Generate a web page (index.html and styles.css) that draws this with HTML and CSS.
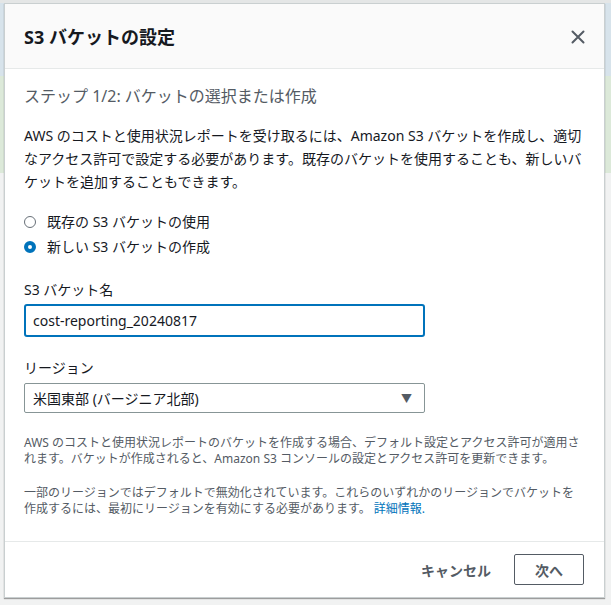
FILE: index.html
```html
<!DOCTYPE html>
<html lang="ja">
  <head>
    <meta charset="UTF-8" />
    <meta name="viewport" content="width=device-width, initial-scale=1.0" />
    <title>S3 バケットの設定</title>
    <link rel="stylesheet" href="styles.css">
  </head>
  <body>
    <div class="modal">
      <div class="modal-header">
        <h2>S3 バケットの設定</h2>
        <button class="close" aria-label="閉じる">
          <svg width="14" height="14" viewBox="0 0 14 14">
            <path d="M1.5 1.5 L12.5 12.5 M12.5 1.5 L1.5 12.5" stroke="#545b64" stroke-width="2" fill="none" stroke-linecap="round" />
          </svg>
        </button>
      </div>
      <div class="modal-body">
        <h3 class="step">ステップ 1/2: バケットの選択または作成</h3>
        <p class="intro">
          AWS のコストと使用状況レポートを受け取るには、Amazon S3 バケットを作成し、適切なアクセス許可で設定する必要があります。既存のバケットを使用することも、新しいバケットを追加することもできます。
        </p>
        <div class="radios">
          <label class="radio"><span class="dot"></span>既存の S3 バケットの使用</label>
          <label class="radio"><span class="dot checked"></span>新しい S3 バケットの作成</label>
        </div>
        <div class="field">
          <label class="field-label" for="bucket">S3 バケット名</label>
          <input class="text-input" type="text" id="bucket" value="cost-reporting_20240817" />
        </div>
        <div class="field">
          <label class="field-label">リージョン</label>
          <div class="select">
            <span>米国東部 (バージニア北部)</span>
            <span class="caret">&#9660;</span>
          </div>
        </div>
        <p class="note">
          AWS のコストと使用状況レポートのバケットを作成する場合、デフォルト設定とアクセス許可が適用されます。バケットが作成されると、Amazon S3 コンソールの設定とアクセス許可を更新できます。
        </p>
        <p class="note">
          一部のリージョンではデフォルトで無効化されています。これらのいずれかのリージョンでバケットを作成するには、最初にリージョンを有効にする必要があります。<a href="#">詳細情報.</a>
        </p>
      </div>
      <div class="modal-footer">
        <button class="btn-link">キャンセル</button>
        <button class="btn">次へ</button>
      </div>
    </div>
  </body>
</html>
```

FILE: styles.css
```css
html {
  font-family: "Noto Sans", "Noto Sans CJK JP", sans-serif;
}

body {
  margin: 0;
  padding: 3px 6px 7px 4px;
  height: 605px;
  box-sizing: border-box;
  background: linear-gradient(to bottom, #e4e6e6 0 3px, #d7e3eb 3px 76px, #dce9d9 76px 173px, #f1f2f2 173px);
}

.modal {
  width: 601px;
  height: 595px;
  box-sizing: border-box;
  background-color: #ffffff;
  border: 1px solid #c9cfd0;
  box-shadow: 0 1px 1px rgba(0, 0, 0, 0.35);
  display: flex;
  flex-direction: column;
}

.modal-header {
  height: 64px;
  flex: none;
  background-color: #fafafa;
  border-bottom: 1px solid #e6e9e9;
  display: flex;
  align-items: center;
  justify-content: space-between;
  padding: 0 19px;
}

.modal-header h2 {
  margin: 0;
  font-size: 18px;
  font-weight: 700;
  color: #16191f;
}

.close {
  border: none;
  background: none;
  padding: 0;
  margin-top: 2px;
  width: 14px;
  height: 14px;
  cursor: pointer;
}

.modal-body {
  flex: 1;
  padding: 0 19px;
  color: #16191f;
  font-size: 14px;
}

.step {
  margin: 15px 0 0;
  font-size: 16px;
  line-height: 24px;
  font-weight: 400;
  color: #545b64;
}

.intro {
  margin: 16px 0 0;
  line-height: 23px;
}

.radios {
  margin-top: 16px;
  display: flex;
  flex-direction: column;
}

.radio {
  display: flex;
  align-items: center;
  gap: 11px;
  line-height: 25px;
}

.dot {
  width: 12px;
  height: 12px;
  box-sizing: border-box;
  border: 1px solid #687078;
  border-radius: 50%;
  background-color: #ffffff;
}

.dot.checked {
  border: 4px solid #0073bb;
}

.field {
  margin-top: 20px;
}

.field-label {
  display: block;
  line-height: 22px;
  margin-bottom: 3px;
}

.text-input {
  display: block;
  width: 401px;
  height: 33px;
  box-sizing: border-box;
  border: 2px solid #0073bb;
  border-radius: 3px;
  padding: 0 7px;
  font-family: inherit;
  font-size: 14px;
  color: #16191f;
  outline: none;
}

.field + .field {
  margin-top: 20px;
}

.field + .field .field-label {
  margin-bottom: 4px;
}

.select {
  width: 401px;
  height: 30px;
  box-sizing: border-box;
  border: 1px solid #879596;
  border-radius: 2px;
  display: flex;
  align-items: center;
  justify-content: space-between;
  padding: 0 12px 0 8px;
}

.caret {
  font-size: 11px;
  color: #545b64;
}

.note {
  margin: 22px 0 0;
  font-size: 12px;
  line-height: 16px;
  color: #545b64;
}

.note + .note {
  margin-top: 18px;
}

.note a {
  display: inline-block;
  margin-left: 3px;
  color: #0073bb;
  text-decoration: none;
}

.modal-footer {
  flex: none;
  border-top: 1px solid #e6e9e9;
  padding: 12px 20px 12px;
  display: flex;
  justify-content: flex-end;
  align-items: center;
  gap: 2px;
}

.btn-link,
.btn {
  font-family: inherit;
  font-size: 14px;
  font-weight: 700;
  color: #545b64;
  height: 31px;
  padding: 0 20px;
  background-color: #ffffff;
  cursor: pointer;
}

.btn-link {
  border: 1px solid transparent;
}

.btn {
  border: 1px solid #545b64;
  border-radius: 2px;
}
```
